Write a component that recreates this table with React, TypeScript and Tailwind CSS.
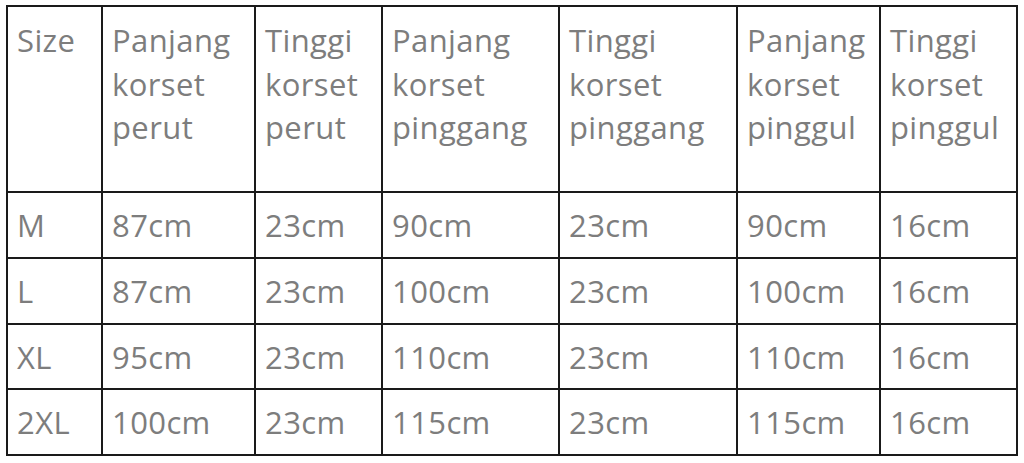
import React from "react";

const headers = [
  ["Size"],
  ["Panjang", "korset", "perut"],
  ["Tinggi", "korset", "perut"],
  ["Panjang", "korset", "pinggang"],
  ["Tinggi", "korset", "pinggang"],
  ["Panjang", "korset", "pinggul"],
  ["Tinggi", "korset", "pinggul"],
];

const rows = [
  { h: "h-[66px]", cells: ["M", "87cm", "23cm", "90cm", "23cm", "90cm", "16cm"] },
  { h: "h-[66px]", cells: ["L", "87cm", "23cm", "100cm", "23cm", "100cm", "16cm"] },
  { h: "h-[65px]", cells: ["XL", "95cm", "23cm", "110cm", "23cm", "110cm", "16cm"] },
  { h: "h-[66px]", cells: ["2XL", "100cm", "23cm", "115cm", "23cm", "115cm", "16cm"] },
];

const colClasses = [
  "w-[95px]",
  "w-[153px]",
  "w-[127px]",
  "w-[177px]",
  "w-[178px]",
  "w-[143px]",
  "w-[137px]",
];

export default function App() {
  return (
    <div className="w-[1024px] h-[463px] bg-white overflow-hidden pl-[6px] pt-[5px] font-['Open_Sans',sans-serif]">
      <table className="border-collapse table-fixed w-[1012px] border-2 border-[#1a1a1a] text-[31px] leading-[43.5px] tracking-[0.4px] text-[#7d7d7d]">
        <colgroup>
          {colClasses.map((c, i) => (
            <col key={i} className={c} />
          ))}
        </colgroup>
        <tbody>
          <tr className="h-[186px]">
            {headers.map((h, i) => (
              <td
                key={i}
                className="border-2 border-[#1a1a1a] align-top pl-[9px] pt-[12px] whitespace-nowrap"
              >
                {h.map((line, j) => (
                  <div key={j}>{line}</div>
                ))}
              </td>
            ))}
          </tr>
          {rows.map((r, ri) => (
            <tr key={ri} className={r.h}>
              {r.cells.map((c, ci) => (
                <td
                  key={ci}
                  className="border-2 border-[#1a1a1a] align-top pl-[9px] pt-[11px] whitespace-nowrap"
                >
                  {c}
                </td>
              ))}
            </tr>
          ))}
        </tbody>
      </table>
    </div>
  );
}
